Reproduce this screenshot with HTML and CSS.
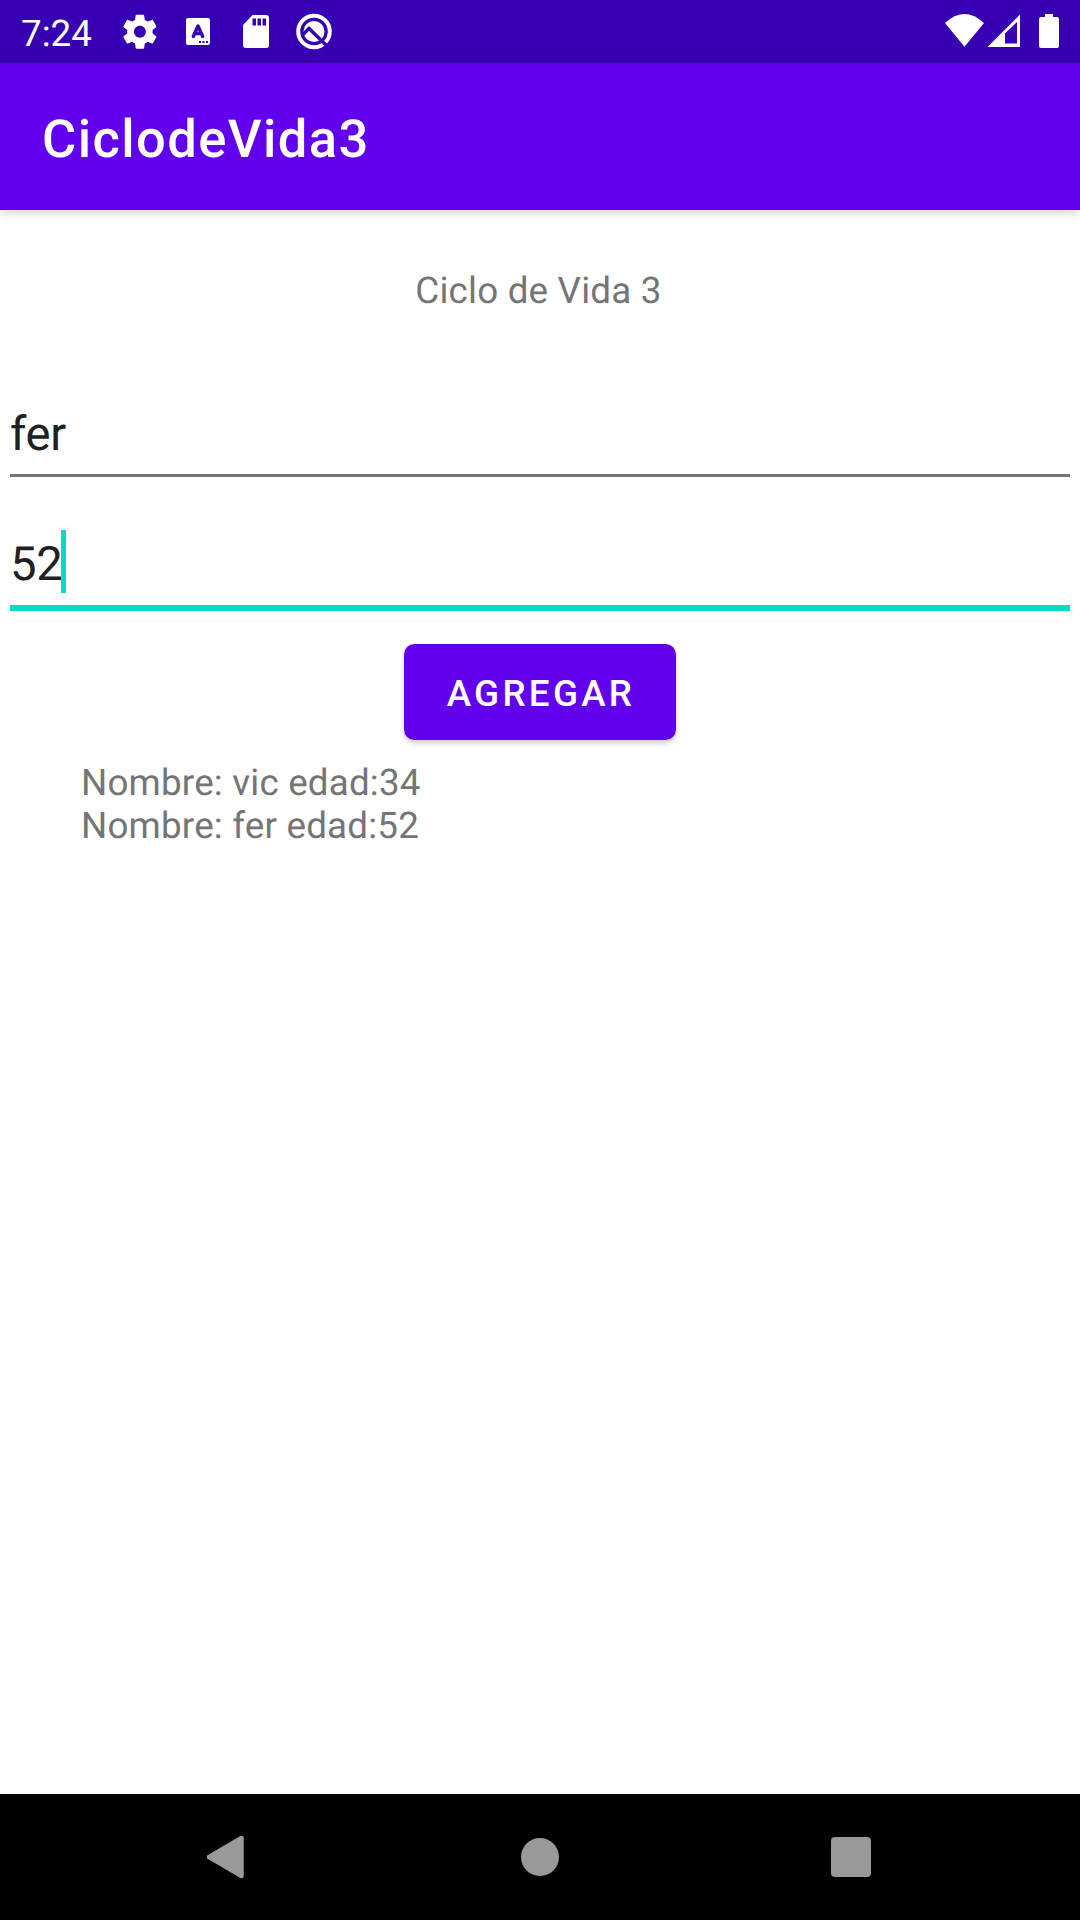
FILE: index.html
```html
<!DOCTYPE html>
<html lang="es">
<head>
<meta charset="utf-8">
<title>CiclodeVida3</title>
<link rel="stylesheet" href="styles.css">
</head>
<body>
<div class="screen">
  <div class="status-bar">
    <span class="clock">7:24</span>
    <svg class="status-icons" width="240" height="63" viewBox="110 0 240 63" fill="#fff">
      <path transform="translate(119.5 11.3) scale(1.7)" d="M19.43 12.98c.04-.32.07-.64.07-.98s-.03-.66-.07-.98l2.11-1.65c.19-.15.24-.42.12-.64l-2-3.46c-.12-.22-.39-.3-.61-.22l-2.49 1c-.52-.4-1.08-.73-1.69-.98l-.38-2.65C14.46 2.18 14.25 2 14 2h-4c-.25 0-.46.18-.49.42l-.38 2.65c-.61.25-1.17.59-1.69.98l-2.49-1c-.23-.09-.49 0-.61.22l-2 3.46c-.13.22-.07.49.12.64l2.11 1.65c-.04.32-.07.65-.07.98s.03.66.07.98l-2.11 1.65c-.19.15-.24.42-.12.64l2 3.46c.12.22.39.3.61.22l2.49-1c.52.4 1.08.73 1.69.98l.38 2.65c.03.24.24.42.49.42h4c.25 0 .46-.18.49-.42l.38-2.65c.61-.25 1.17-.59 1.69-.98l2.49 1c.23.09.49 0 .61-.22l2-3.46c.12-.22.07-.49-.12-.64l-2.11-1.65zM12 15.5c-1.93 0-3.5-1.57-3.5-3.5s1.57-3.5 3.5-3.5 3.500 1.57 3.500 3.500-1.570 3.500-3.500 3.500z"/>
      <rect x="186" y="18" width="24" height="27" rx="2"/>
      <path d="M193.300 36.500L198 26L202.700 36.500M194.800 33.500H201.200" fill="none" stroke="#3700b3" stroke-width="3.400" stroke-linecap="round" stroke-linejoin="round"/>
      <path d="M199 41h2v2h-2zM202.500 41h2v2h-2zM206 41h2v2h-2z" fill="#3700b3"/>
      <path fill-rule="evenodd" d="M252.500 15H266Q269 15 269 18V45Q269 48 266 48H246Q243 48 243 45V25ZM252.500 18.500V25.500H256V18.500ZM257.500 18.500V25.500H261V18.500ZM262.500 18.500V25.500H266V18.500Z"/>
      <circle cx="314" cy="31.500" r="15.800" fill="none" stroke="#fff" stroke-width="4"/>
      <circle cx="314" cy="31.500" r="10.500"/>
      <path d="M303 34.500L309 28.500L328 47" fill="none" stroke="#3700b3" stroke-width="3.400"/>
    </svg>
    <svg class="system-icons" width="140" height="63" viewBox="940 0 140 63" fill="#fff">
      <path d="M945 23Q964.500 5 984 23L964.500 46.800Z"/>
      <path fill-rule="evenodd" d="M987.500 47L1020 14.500V47ZM1005 33.500V43.500H1017V22Z"/>
      <path d="M1045 14H1053V17H1057Q1059 17 1059 19V46Q1059 48 1057 48H1041Q1039 48 1039 46V19Q1039 17 1041 17H1045Z"/>
    </svg>
  </div>
  <header class="app-bar"><h1 class="app-title">CiclodeVida3</h1></header>
  <main class="content">
    <p class="heading">Ciclo de Vida 3</p>
    <div class="field">fer</div>
    <div class="field field-focused">52<span class="caret"></span></div>
    <button class="add-button" type="button">AGREGAR</button>
    <div class="list"><div>Nombre: vic edad:34</div><div>Nombre: fer edad:52</div></div>
  </main>
  <nav class="nav-bar">
    <svg width="1080" height="126" viewBox="0 1794 1080 126" fill="#999">
      <path d="M209 1857L241.500 1838V1876Z" stroke="#999" stroke-width="4.500" stroke-linejoin="round"/>
      <circle cx="540" cy="1857" r="19"/>
      <rect x="831" y="1837" width="40" height="40" rx="4"/>
    </svg>
  </nav>
</div>
</body>
</html>
```
FILE: styles.css
```css
* { box-sizing: border-box; }

body {
  margin: 0;
  font-family: Roboto, sans-serif;
  font-size: 36.75px;
  text-rendering: geometricPrecision;
  background: #fff;
}

.screen {
  width: 1080px;
  height: 1920px;
  display: flex;
  flex-direction: column;
}

svg { display: block; flex: none; }

.status-bar {
  flex: 0 0 63px;
  display: flex;
  align-items: center;
  padding-left: 21px;
  background: #3700b3;
  color: #fff;
}

.clock {
  width: 89px;
  line-height: 43px;
  padding-top: 4px;
}

.system-icons { margin-left: auto; }

.app-bar {
  flex: 0 0 147px;
  display: flex;
  align-items: center;
  padding: 4px 42px 0;
  background: #6200ee;
  color: #fff;
  box-shadow: 0 2px 10px rgba(0, 0, 0, .2);
}

.app-title {
  margin: 0;
  font-size: 52.5px;
  font-weight: 500;
  letter-spacing: 1.4px;
}

.content {
  flex: 1;
  display: flex;
  flex-direction: column;
  align-items: stretch;
  color: #757575;
  letter-spacing: .2px;
}

.heading {
  margin: 59px 0 82px;
  padding-right: 3px;
  line-height: 44px;
  text-align: center;
}

.field {
  display: flex;
  align-items: center;
  height: 82px;
  margin: 0 10px;
  padding-bottom: 2px;
  border-bottom: 3px solid #757575;
  font-size: 47.25px;
  letter-spacing: -.4px;
  color: #212121;
}

.field-focused {
  height: 103px;
  margin-top: 31px;
  border-bottom: 6px solid #03dac5;
  padding: 14px 0 0;
}

.caret {
  width: 5px;
  height: 63px;
  margin: -4px 0 0 -1px;
  background: #03dac5;
}

.add-button {
  align-self: center;
  width: 272px;
  height: 96px;
  margin-top: 33px;
  padding: 2px 0 0 2px;
  border: 0;
  border-radius: 10.5px;
  background: #6200ee;
  color: #fff;
  font: 500 36.75px Roboto, sans-serif;
  letter-spacing: .0893em;
  box-shadow: 0 3px 5px rgba(0, 0, 0, .2);
}

.list {
  margin: 21px 0 0 81px;
  line-height: 43px;
}

.nav-bar {
  flex: 0 0 126px;
  background: #000;
}
```
